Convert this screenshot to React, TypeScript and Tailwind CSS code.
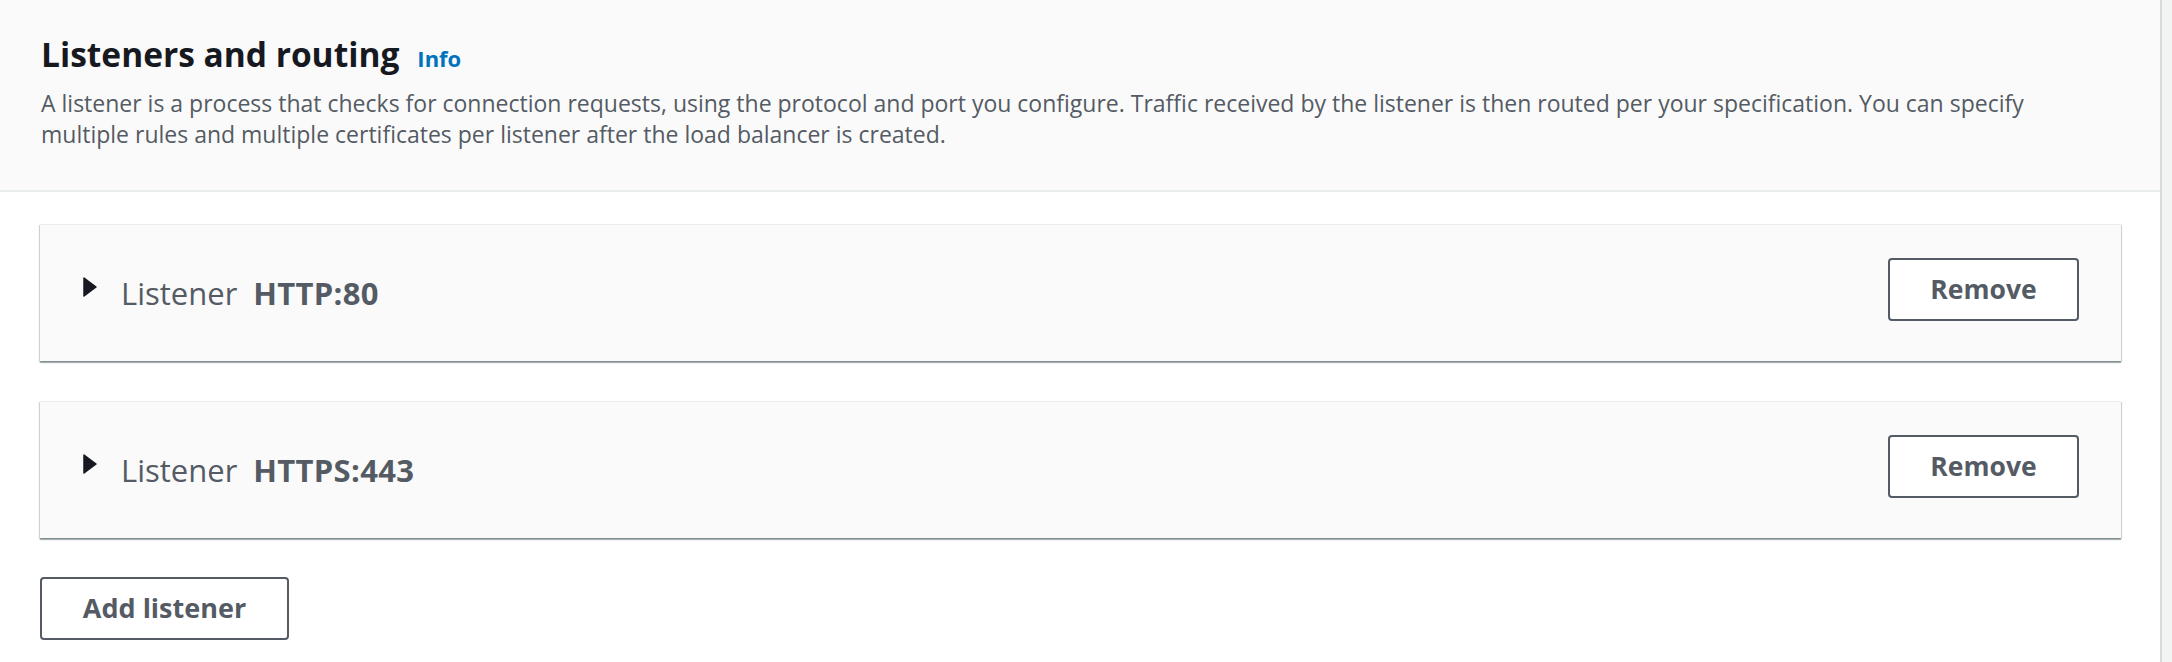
import React from "react";

function Caret() {
  return (
    <svg width="14" height="20" viewBox="0 0 14 20" className="mt-[4px] shrink-0">
      <polygon points="1,1 13,10 1,19" fill="#16191f" stroke="#16191f" strokeWidth="1.5" strokeLinejoin="round" />
    </svg>
  );
}

function Listener({ proto }: { proto: string }) {
  return (
    <div className="h-[137px] bg-[#fafafa] border-t border-[#eaeded] shadow-[0_2px_1px_0_rgba(0,28,36,0.3),1px_1px_1px_0_rgba(0,28,36,0.15),-1px_1px_1px_0_rgba(0,28,36,0.15)] flex items-start justify-between pt-[33px] pl-[43px] pr-[42px]">
      <div className="mt-[15px] flex items-start">
        <Caret />
        <div className="ml-[24px] text-[31px] leading-[41px] text-[#545b64]">
          <span>Listener</span>
          <span className="ml-[16px] font-bold tracking-[0.3px]">{proto}</span>
        </div>
      </div>
      <button className="w-[191px] h-[63px] flex items-center justify-center bg-white border-2 border-[#545b64] rounded-[4px] text-[26.5px] font-bold text-[#545b64]">
        Remove
      </button>
    </div>
  );
}

export default function App() {
  return (
    <div className="w-[2172px] h-[662px] flex bg-[#f2f3f3] overflow-hidden" style={{ fontFamily: '"Open Sans", "Noto Sans", sans-serif' }}>
      <div className="w-[2162px] shrink-0 bg-white border-r-2 border-[#d5dbdb] h-full">
        <div className="h-[192px] bg-[#fafafa] border-b-2 border-[#eaeded] pt-[34px] pl-[41px]">
          <div className="flex items-baseline">
            <h2 className="text-[33.5px] leading-[40px] font-bold text-[#16191f]">Listeners and routing</h2>
            <a className="ml-[18px] text-[22px] font-bold text-[#0073bb]">Info</a>
          </div>
          <p className="mt-[13px] max-w-[2040px] text-[23px] leading-[31px] text-[#545b64]">
            A listener is a process that checks for connection requests, using the protocol and port you configure. Traffic received by the listener is then routed per your specification. You can specify multiple rules and multiple certificates per listener after the load balancer is created.
          </p>
        </div>
        <div className="pt-[32px] pl-[40px] pr-[39px] flex flex-col">
          <Listener proto="HTTP:80" />
          <div className="mt-[40px]">
            <Listener proto="HTTPS:443" />
          </div>
          <div className="mt-[39px]">
            <button className="w-[249px] h-[63px] flex items-center justify-center bg-white border-2 border-[#545b64] rounded-[4px] text-[27px] font-bold text-[#545b64]">
              Add listener
            </button>
          </div>
        </div>
      </div>
    </div>
  );
}
